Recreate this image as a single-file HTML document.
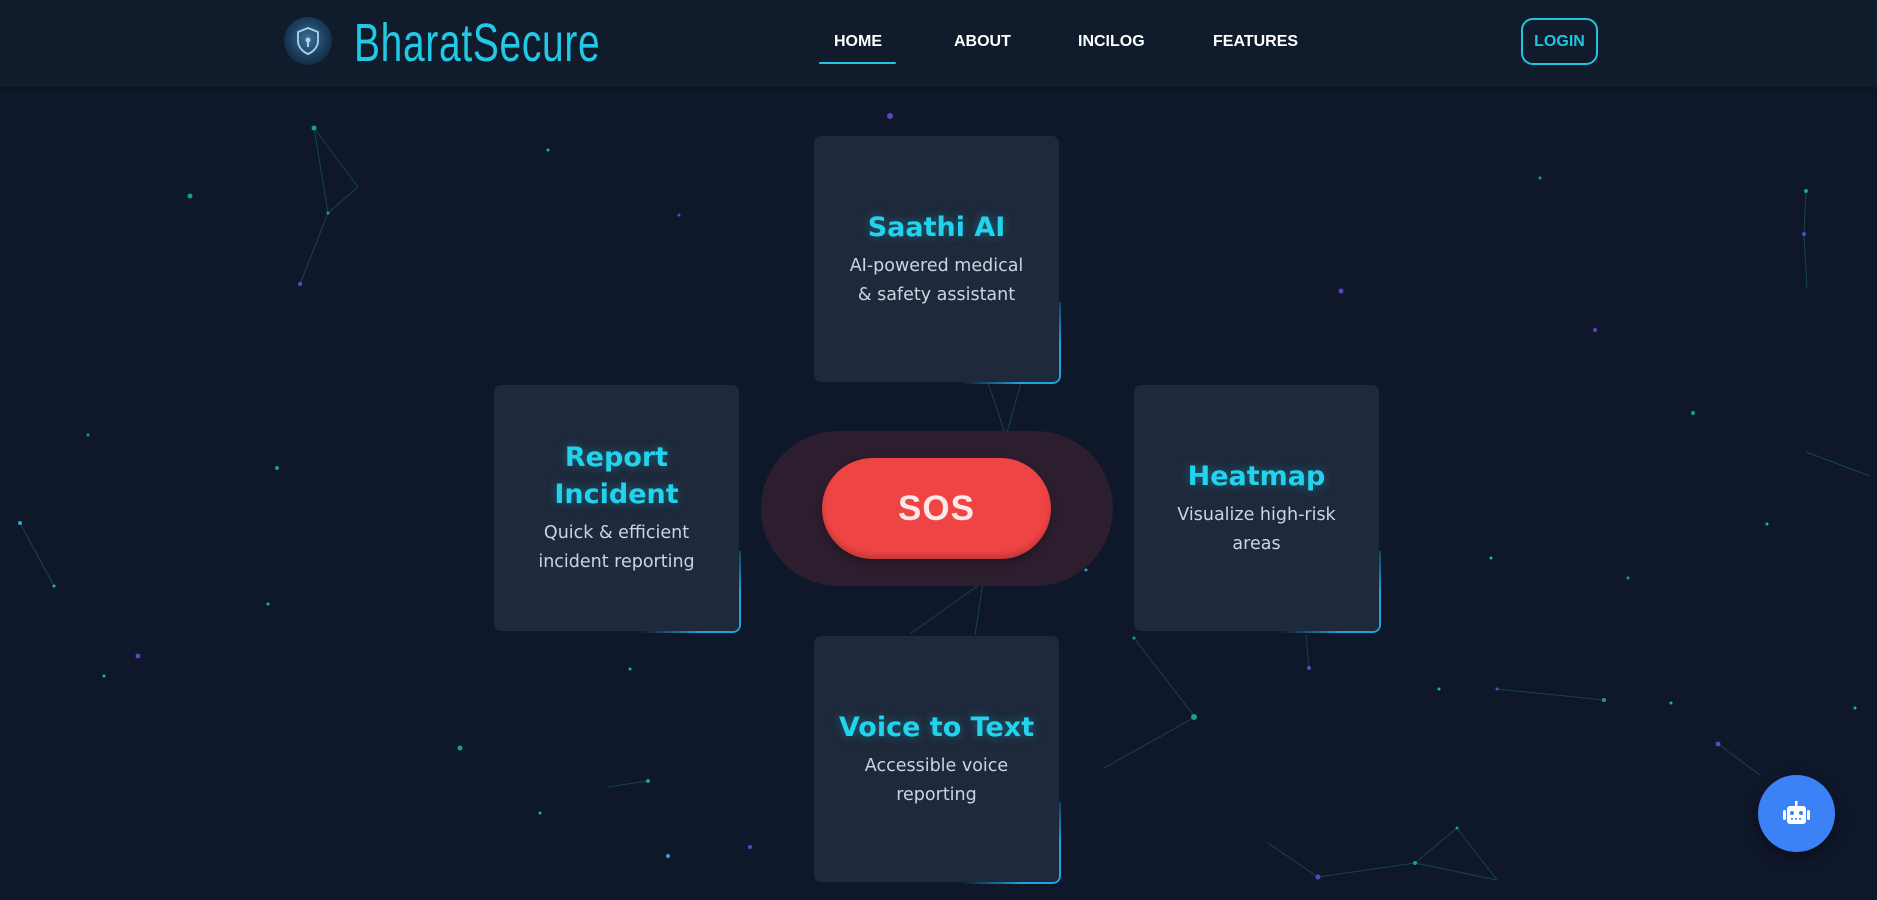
<!DOCTYPE html>
<html><head><meta charset="utf-8"><style>
*{margin:0;padding:0;box-sizing:border-box}
html,body{width:1877px;height:900px;overflow:hidden;background:#0f172a;font-family:"Liberation Sans",sans-serif}
.hdr{position:absolute;left:0;top:0;width:1877px;height:87px;background:#101b2c;box-shadow:0 2px 6px rgba(0,0,0,.3)}
.logo{position:absolute;left:284px;top:17px;width:48px;height:48px;border-radius:50%;background:radial-gradient(circle at 50% 45%,#3d6f95 0%,#1f4465 45%,#102a44 75%,#0f1a2b 100%)}
.brand{position:absolute;left:354px;top:12px;font-size:54px;color:#22c8e5;transform:scaleX(.72);transform-origin:left top;letter-spacing:1px;white-space:nowrap}
.nav{position:absolute;top:33px;font-size:16px;font-weight:bold;color:#fff}
.ul{position:absolute;left:819px;top:62px;width:77px;height:2px;background:#22c5e0;border-radius:2px}
.login{position:absolute;left:1521px;top:18px;width:77px;height:47px;border:2px solid #22c5e0;border-radius:12px;color:#22c5e0;font-weight:bold;font-size:16px;text-align:center;line-height:43px}
.card{position:absolute;width:245px;height:246px;background:#1e293b;border-radius:7px;display:flex;flex-direction:column;align-items:center;justify-content:center;text-align:center;font-family:"DejaVu Sans",sans-serif}
.card::after{content:"";position:absolute;right:-2px;bottom:-2px;width:120px;height:80px;border-right:2px solid #1ea5e0;border-bottom:2px solid #1ea5e0;border-bottom-right-radius:8px;-webkit-mask:linear-gradient(135deg,transparent 50%,#000 80%);mask:linear-gradient(135deg,transparent 50%,#000 80%)}
.card h3{font-size:27px;color:#22d3ee;font-weight:bold;line-height:37px;text-shadow:0 0 10px rgba(34,211,238,.35);margin-bottom:6px}
.card p{font-size:17.5px;color:#cbd5e1;line-height:29px}
.pill{position:absolute;left:761px;top:431px;width:352px;height:155px;border-radius:78px;background:#2d1e2f}
.sos{position:absolute;left:822px;top:458px;width:229px;height:101px;border-radius:51px;background:#ef4444;box-shadow:inset 0 -4px 6px rgba(0,0,0,.18),0 4px 10px rgba(0,0,0,.3);color:#fde8e8;font-weight:bold;font-size:35px;text-align:center;line-height:101px;letter-spacing:1px}
.bot{position:absolute;left:1758px;top:775px;width:77px;height:77px;border-radius:50%;background:#3b82f6;box-shadow:0 6px 14px rgba(0,0,0,.35)}
</style></head><body>
<svg width="1877" height="900" style="position:absolute;left:0;top:0">
<g stroke="#14534f" stroke-width="1" opacity=".8">
<line x1="314" y1="128" x2="328" y2="213"/><line x1="314" y1="128" x2="358" y2="187"/><line x1="328" y1="213" x2="358" y2="187"/><line x1="328" y1="213" x2="300" y2="284"/>
<line x1="1806" y1="191" x2="1804" y2="234"/><line x1="1804" y1="234" x2="1807" y2="288"/>
<line x1="20" y1="523" x2="54" y2="586"/><line x1="1806" y1="452" x2="1870" y2="476"/>
<line x1="988" y1="383" x2="1006" y2="436"/><line x1="1006" y1="436" x2="1021" y2="383"/>
<line x1="983" y1="582" x2="910" y2="634"/><line x1="983" y1="582" x2="975" y2="635"/>
<line x1="1134" y1="638" x2="1195" y2="717"/><line x1="1195" y1="717" x2="1104" y2="768"/>
<line x1="1306" y1="635" x2="1309" y2="668"/>
<line x1="608" y1="787" x2="648" y2="781"/>
<line x1="1457" y1="828" x2="1415" y2="863"/><line x1="1457" y1="828" x2="1497" y2="880"/><line x1="1415" y1="863" x2="1318" y2="877"/><line x1="1318" y1="877" x2="1268" y2="843"/><line x1="1415" y1="863" x2="1497" y2="880"/>
<line x1="1718" y1="744" x2="1760" y2="775"/><line x1="1497" y1="689" x2="1604" y2="700"/>
</g>
<g fill="#14b8a6" opacity=".85">
<circle cx="314" cy="128" r="2.5"/><circle cx="190" cy="196" r="2.5"/><circle cx="328" cy="213" r="1.5"/><circle cx="277" cy="468" r="2"/><circle cx="88" cy="435" r="1.5"/><circle cx="460" cy="748" r="2.5"/><circle cx="648" cy="781" r="2"/><circle cx="1194" cy="717" r="3"/><circle cx="1693" cy="413" r="2"/><circle cx="1806" cy="191" r="2"/><circle cx="1604" cy="700" r="2"/><circle cx="1628" cy="578" r="1.5"/><circle cx="1415" cy="863" r="2"/><circle cx="1457" cy="828" r="1.5"/><circle cx="1006" cy="436" r="1.5"/><circle cx="1134" cy="638" r="1.5"/><circle cx="1540" cy="178" r="1.5"/>
</g>
<g fill="#22d3ee" opacity=".8">
<circle cx="548" cy="150" r="1.5"/><circle cx="20" cy="523" r="2"/><circle cx="268" cy="604" r="1.5"/><circle cx="104" cy="676" r="1.5"/><circle cx="630" cy="669" r="1.5"/><circle cx="668" cy="856" r="2"/><circle cx="1086" cy="570" r="1.5"/><circle cx="1767" cy="524" r="1.5"/><circle cx="1491" cy="558" r="1.5"/><circle cx="1855" cy="708" r="1.5"/><circle cx="1439" cy="689" r="1.5"/><circle cx="1671" cy="703" r="1.5"/><circle cx="540" cy="813" r="1.5"/><circle cx="54" cy="586" r="1.5"/>
</g>
<g fill="#6d4bd8" opacity=".85">
<circle cx="890" cy="116" r="3"/><circle cx="1341" cy="291" r="2.5"/><circle cx="1595" cy="330" r="2"/><circle cx="1804" cy="234" r="2"/><circle cx="138" cy="656" r="2.5"/><circle cx="1718" cy="744" r="2.5"/><circle cx="1318" cy="877" r="2.5"/><circle cx="750" cy="847" r="2"/><circle cx="1309" cy="668" r="2"/><circle cx="300" cy="284" r="2"/><circle cx="679" cy="215" r="1.5"/><circle cx="1497" cy="689" r="1.5"/>
</g>
</svg>
<div class="hdr"></div>
<div class="logo"><svg width="48" height="48" viewBox="0 0 48 48"><path d="M24 11 L34 15 V24 C34 30 29 35 24 37 C19 35 14 30 14 24 V15 Z" fill="none" stroke="#a9d4ee" stroke-width="1.8"/><circle cx="24" cy="23" r="2.5" fill="#a9d4ee"/><rect x="23" y="24" width="2" height="6" fill="#a9d4ee"/></svg></div>
<div class="brand">BharatSecure</div>
<div class="nav" style="left:834px">HOME</div>
<div class="ul"></div>
<div class="nav" style="left:954px">ABOUT</div>
<div class="nav" style="left:1078px">INCILOG</div>
<div class="nav" style="left:1213px">FEATURES</div>
<div class="login">LOGIN</div>

<div class="card" style="left:814px;top:136px"><h3>Saathi AI</h3><p>AI-powered medical<br>&amp; safety assistant</p></div>
<div class="card" style="left:494px;top:385px"><h3>Report<br>Incident</h3><p>Quick &amp; efficient<br>incident reporting</p></div>
<div class="card" style="left:1134px;top:385px"><h3>Heatmap</h3><p>Visualize high-risk<br>areas</p></div>
<div class="card" style="left:814px;top:636px"><h3>Voice to Text</h3><p>Accessible voice<br>reporting</p></div>

<div class="pill"></div>
<div class="sos">SOS</div>

<div class="bot"><svg width="77" height="77" viewBox="0 0 77 77"><rect x="37" y="26" width="2.5" height="6" fill="#fff"/><rect x="29" y="31" width="19" height="18" rx="3" fill="#fff"/><rect x="25" y="35" width="3" height="10" rx="1.5" fill="#fff"/><rect x="49" y="35" width="3" height="10" rx="1.5" fill="#fff"/><circle cx="34" cy="38" r="2" fill="#3b82f6"/><circle cx="43" cy="38" r="2" fill="#3b82f6"/><rect x="33" y="43" width="2" height="1.6" fill="#3b82f6"/><rect x="37" y="43" width="2" height="1.6" fill="#3b82f6"/><rect x="41" y="43" width="2" height="1.6" fill="#3b82f6"/></svg></div>
</body></html>
